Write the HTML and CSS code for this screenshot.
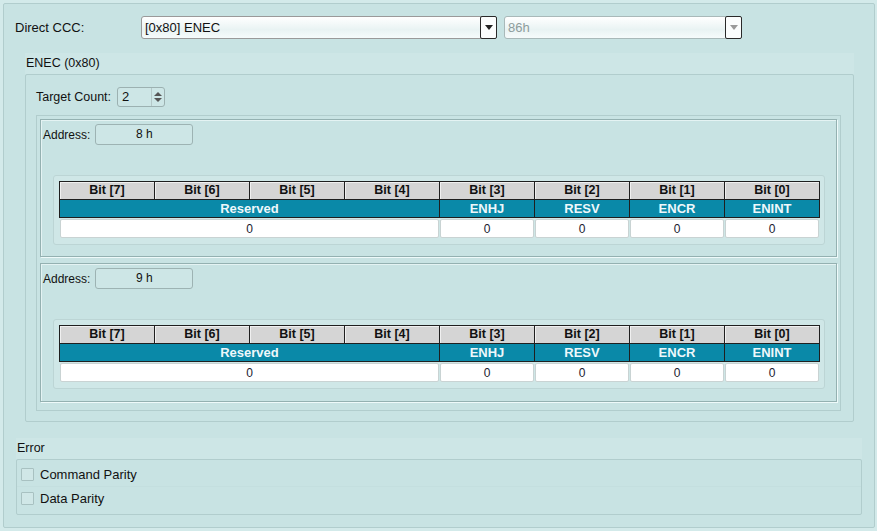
FILE: index.html
```html
<!DOCTYPE html>
<html lang="en">
<head>
    <meta charset="UTF-8">
    <title>Direct CCC - ENEC</title>
    <link rel="stylesheet" href="styles.css">
</head>
<body>
    <div class="panel">
        <div class="ccc-row">
            <span class="ccc-label">Direct CCC:</span>
            <div class="combo combo-main">
                <span class="combo-text">[0x80] ENEC</span>
                <span class="combo-btn"><span class="arrow"></span></span>
            </div>
            <div class="combo combo-sub disabled">
                <span class="combo-text">86h</span>
                <span class="combo-btn"><span class="arrow"></span></span>
            </div>
        </div>

        <div class="section enec">
            <div class="section-title">ENEC (0x80)</div>
            <div class="group">
                <div class="target-row">
                    <span>Target Count:</span>
                    <div class="spinner">
                        <span class="spin-value">2</span>
                        <span class="spin-btns">
                            <span class="spin-up"></span>
                            <span class="spin-down"></span>
                        </span>
                    </div>
                </div>

                <div class="targets">
                    <div class="register">
                        <div class="address-row">
                            <span>Address:</span>
                            <span class="address">8 h</span>
                        </div>
                        <div class="bits-wrap">
                            <div class="bits-dark">
                                <div class="head">Bit [7]</div>
                                <div class="head">Bit [6]</div>
                                <div class="head">Bit [5]</div>
                                <div class="head">Bit [4]</div>
                                <div class="head">Bit [3]</div>
                                <div class="head">Bit [2]</div>
                                <div class="head">Bit [1]</div>
                                <div class="head">Bit [0]</div>
                                <div class="field span4">Reserved</div>
                                <div class="field">ENHJ</div>
                                <div class="field">RESV</div>
                                <div class="field">ENCR</div>
                                <div class="field">ENINT</div>
                            </div>
                            <div class="bits-values">
                                <div class="val span4">0</div>
                                <div class="val">0</div>
                                <div class="val">0</div>
                                <div class="val">0</div>
                                <div class="val">0</div>
                            </div>
                        </div>
                    </div>

                    <div class="register">
                        <div class="address-row">
                            <span>Address:</span>
                            <span class="address">9 h</span>
                        </div>
                        <div class="bits-wrap">
                            <div class="bits-dark">
                                <div class="head">Bit [7]</div>
                                <div class="head">Bit [6]</div>
                                <div class="head">Bit [5]</div>
                                <div class="head">Bit [4]</div>
                                <div class="head">Bit [3]</div>
                                <div class="head">Bit [2]</div>
                                <div class="head">Bit [1]</div>
                                <div class="head">Bit [0]</div>
                                <div class="field span4">Reserved</div>
                                <div class="field">ENHJ</div>
                                <div class="field">RESV</div>
                                <div class="field">ENCR</div>
                                <div class="field">ENINT</div>
                            </div>
                            <div class="bits-values">
                                <div class="val span4">0</div>
                                <div class="val">0</div>
                                <div class="val">0</div>
                                <div class="val">0</div>
                                <div class="val">0</div>
                            </div>
                        </div>
                    </div>
                </div>
            </div>
        </div>

        <div class="section error">
            <div class="section-title">Error</div>
            <div class="group error-group">
                <label class="check-row"><span class="check"></span>Command Parity</label>
                <label class="check-row"><span class="check"></span>Data Parity</label>
            </div>
        </div>
    </div>
</body>
</html>
```

FILE: styles.css
```css
:root {
    --bg: #c8e3e3;
    --bg-light: #cde6e6;
    --line: #b1cdcd;
    --line-dark: #94b1b1;
    --teal: #0a89a8;
    --text: #111;
}

* {
    margin: 0;
    padding: 0;
    box-sizing: border-box;
}

body {
    font-family: "Liberation Sans", Arial, sans-serif;
    font-size: 12px;
    color: var(--text);
    background: #d3eaea;
    margin: 3px 2px 3px 3px;
}

.panel {
    height: 525px;
    background: var(--bg);
    border: 1px solid var(--line);
    border-radius: 2px;
}

/* top selector row */
.ccc-row {
    display: flex;
    align-items: center;
    margin-top: 12px;
    padding-left: 11px;
    height: 23px;
}

.ccc-label {
    width: 126px;
    font-size: 13px;
}

.combo {
    display: flex;
    height: 23px;
    border: 1px solid #9a9a9a;
    border-radius: 3px;
    background: linear-gradient(to bottom, #ffffff, #e9f3f3 60%, #f6fbfb);
}

.combo-main {
    width: 356px;
}

.combo-sub {
    width: 238px;
    margin-left: 7px;
    border-color: #a9b9b9;
}

.combo-text {
    flex: 1;
    padding-left: 3px;
    line-height: 21px;
    font-size: 13px;
}

.disabled .combo-text {
    color: #8d9c9c;
}

.combo-btn {
    width: 17px;
    margin: -1px -1px -1px 0;
    border: 1.5px solid #2a2a2a;
    border-radius: 2px;
    background: #fbfdfd;
    display: flex;
    align-items: center;
    justify-content: center;
}

.arrow {
    width: 0;
    height: 0;
    border-left: 4px solid transparent;
    border-right: 4px solid transparent;
    border-top: 5px solid #222;
}

.disabled .arrow {
    border-top-color: #9a9a9a;
}

/* grouped sections */
.section-title {
    height: 21px;
    line-height: 21px;
    background: var(--bg-light);
}

.enec {
    margin: 14px 0 0 21px;
    width: 829px;
}

.enec .section-title {
    padding-left: 1px;
    font-size: 12.5px;
}

.group {
    border: 1px solid var(--line);
    border-radius: 2px;
}

.enec .group {
    height: 348px;
    padding: 12px 12px 0 10px;
}

.target-row {
    display: flex;
    align-items: center;
    gap: 6px;
    height: 20px;
    font-size: 12.5px;
}

.spinner {
    display: flex;
    width: 48px;
    height: 20px;
    border: 1px solid #9cb1b1;
    border-radius: 3px;
    background: var(--bg-light);
}

.spin-value {
    flex: 1;
    padding-left: 4px;
    line-height: 18px;
    font-size: 13px;
}

.spin-btns {
    width: 13px;
    border-left: 1px solid #b4c8c8;
    display: flex;
    flex-direction: column;
    align-items: center;
    justify-content: center;
    gap: 2px;
}

.spin-up,
.spin-down {
    width: 0;
    height: 0;
    border-left: 4px solid transparent;
    border-right: 4px solid transparent;
}

.spin-up {
    border-bottom: 4px solid #555;
}

.spin-down {
    border-top: 4px solid #555;
}

.targets {
    margin-top: 8px;
    height: 296px;
    border: 1px solid var(--line);
    padding: 3px 3px 0 3px;
}

.register {
    height: 138px;
    border: 1px solid var(--line-dark);
    box-shadow: 1px 1px 0 #eefafa, inset 1px 1px 0 #e4f3f3;
    padding: 4px 12px 0 2px;
}

.register + .register {
    margin-top: 6px;
    height: 139px;
}

.address-row {
    display: flex;
    align-items: center;
    height: 21px;
    gap: 5px;
}

.address {
    width: 98px;
    height: 21px;
    line-height: 19px;
    text-align: center;
    border: 1px solid #9db3b3;
    border-radius: 3px;
    background: var(--bg-light);
}

.bits-wrap {
    margin: 30px 0 0 10px;
    width: 772px;
    padding: 5px 4px 6px 5px;
    border: 1px solid #bcd5d5;
    border-radius: 3px;
    background: #cfe7e7;
}

.bits-dark {
    display: grid;
    grid-template-columns: repeat(8, 94px);
    gap: 1px;
    padding: 1px;
    background: #1f1f1f;
}

.head,
.field {
    height: 17px;
    line-height: 17px;
    text-align: center;
    font-weight: 700;
}

.head {
    font-size: 12.5px;
    background: #d5d5d5;
    box-shadow: inset 1px 1px 0 #f0f0f0;
}

.field {
    font-size: 13px;
    background: var(--teal);
    color: #eef8fb;
}

.span4 {
    grid-column: span 4;
}

.bits-values {
    display: grid;
    grid-template-columns: repeat(8, 94px);
    gap: 1px;
    padding: 0 1px;
    margin-top: 1px;
}

.val {
    height: 19px;
    line-height: 18px;
    text-align: center;
    color: #1a1a30;
    background: #fff;
    border: 1px solid #c9d3d3;
    border-radius: 2px;
}

/* error flags */
.error {
    margin: 16px 0 0 12px;
    width: 846px;
}

.error .section-title {
    padding-left: 1px;
    font-size: 12.5px;
}

.error-group {
    height: 56px;
    padding-top: 2px;
}

.check-row {
    display: flex;
    align-items: center;
    gap: 6px;
    height: 24px;
    padding-left: 4px;
    font-size: 13px;
}

.check-row + .check-row {
    border-top: 1px solid #c4dfdf;
}

.check {
    width: 13px;
    height: 13px;
    border: 1px solid #a8c1c1;
    border-radius: 1px;
    background: #d0e7e7;
}
```
